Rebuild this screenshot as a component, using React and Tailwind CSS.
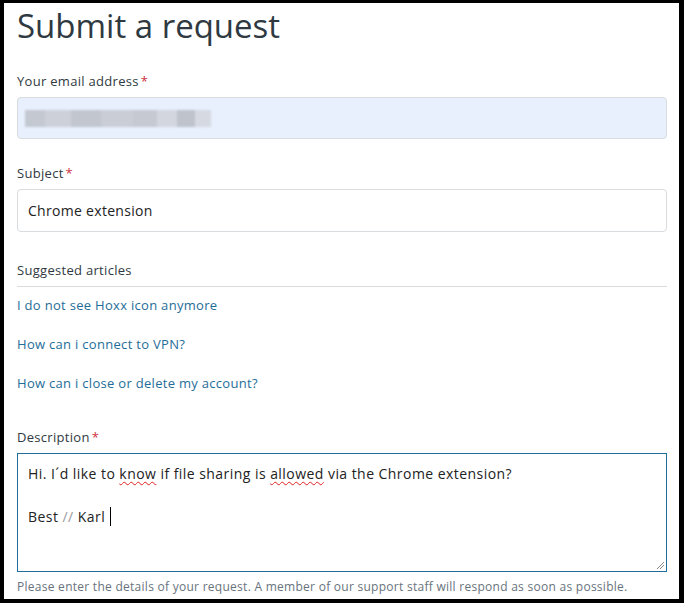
import React from "react";

const font = { fontFamily: '"Open Sans", "Noto Sans", "Liberation Sans", sans-serif' };

function Req() {
  return <span className="ml-[2px] text-[#cc3340]">*</span>;
}

function Label({ children, req }) {
  return (
    <div className="text-[13px] leading-[20px] tracking-[0.3px] text-[#2f3941]">
      {children}
      {req && <Req />}
    </div>
  );
}

function Blur() {
  const blocks = [
    ["w-[20px]", "bg-[#c4c8d0]"],
    ["w-[26px]", "bg-[#cdd0d8]"],
    ["w-[30px]", "bg-[#c2c6ce]"],
    ["w-[32px]", "bg-[#cacdd5]"],
    ["w-[24px]", "bg-[#c6c9d1]"],
    ["w-[20px]", "bg-[#d3d6de]"],
    ["w-[18px]", "bg-[#bfc3cb]"],
    ["w-[16px]", "bg-[#d6d9e1]"],
  ];
  return (
    <div className="flex h-[17px] blur-[1px]">
      {blocks.map(([w, c], i) => (
        <div key={i} className={`${w} ${c} h-full`} />
      ))}
    </div>
  );
}

export default function App() {
  return (
    <div className="w-[684px] h-[603px] bg-black pt-[3px] pl-[4px] pr-[5px] pb-[4px]" style={font}>
      <div className="w-full h-full bg-white pl-[13px] pr-[12px] overflow-hidden">
        <div className="h-[68px] pt-[3px]">
          <h1 className="text-[33px] leading-[40px] text-[#2f3941]">Submit a request</h1>
        </div>

        <Label req>Your email address</Label>
        <div className="mt-[6px] h-[42px] rounded-[4px] border border-[#d8dcde] bg-[#e8f0fe] flex items-center pl-[7px]">
          <Blur />
        </div>

        <div className="mt-[24px]">
          <Label req>Subject</Label>
        </div>
        <div className="mt-[6px] h-[43px] rounded-[4px] border border-[#d8dcde] bg-white flex items-center pl-[10px] text-[14px] tracking-[0.3px] text-[#222]">
          Chrome extension
        </div>

        <div className="mt-[28px] pb-[6px] border-b border-[#d8dcde]">
          <Label>Suggested articles</Label>
        </div>
        <div className="mt-[8px] flex flex-col gap-[19px] text-[13px] leading-[20px] tracking-[0.3px] text-[#1f6d98]">
          <div>I do not see Hoxx icon anymore</div>
          <div>How can i connect to VPN?</div>
          <div>How can i close or delete my account?</div>
        </div>

        <div className="mt-[34px]">
          <Label req>Description</Label>
        </div>
        <div className="relative mt-[6px] h-[119px] border border-[#1f6d98] bg-white pl-[10px] pt-[9px] text-[14px] leading-[21.5px] tracking-[0.45px] text-[#222]">
          <div>
            Hi. I´d like to{" "}
            <span className="underline decoration-wavy decoration-[#e02020] decoration-1 underline-offset-2">know</span>{" "}
            if file sharing is{" "}
            <span className="underline decoration-wavy decoration-[#e02020] decoration-1 underline-offset-2">allowed</span>{" "}
            via the Chrome extension?
          </div>
          <div className="h-[21.5px]" />
          <div className="flex items-center">
            <span>
              Best <span className="text-[#999]">//</span> Karl
            </span>
            <span className="ml-[5px] inline-block w-px h-[19px] bg-black" />
          </div>
          <svg className="absolute right-[1px] bottom-[1px]" width="10" height="10" viewBox="0 0 10 10">
            <line x1="2" y1="9" x2="9" y2="2" stroke="#888" strokeWidth="1" />
            <line x1="5" y1="9" x2="9" y2="5" stroke="#888" strokeWidth="1" />
          </svg>
        </div>
        <div className="mt-[7px] text-[12px] leading-[16px] tracking-[0.27px] text-[#68737d]">
          Please enter the details of your request. A member of our support staff will respond as soon as possible.
        </div>
      </div>
    </div>
  );
}
